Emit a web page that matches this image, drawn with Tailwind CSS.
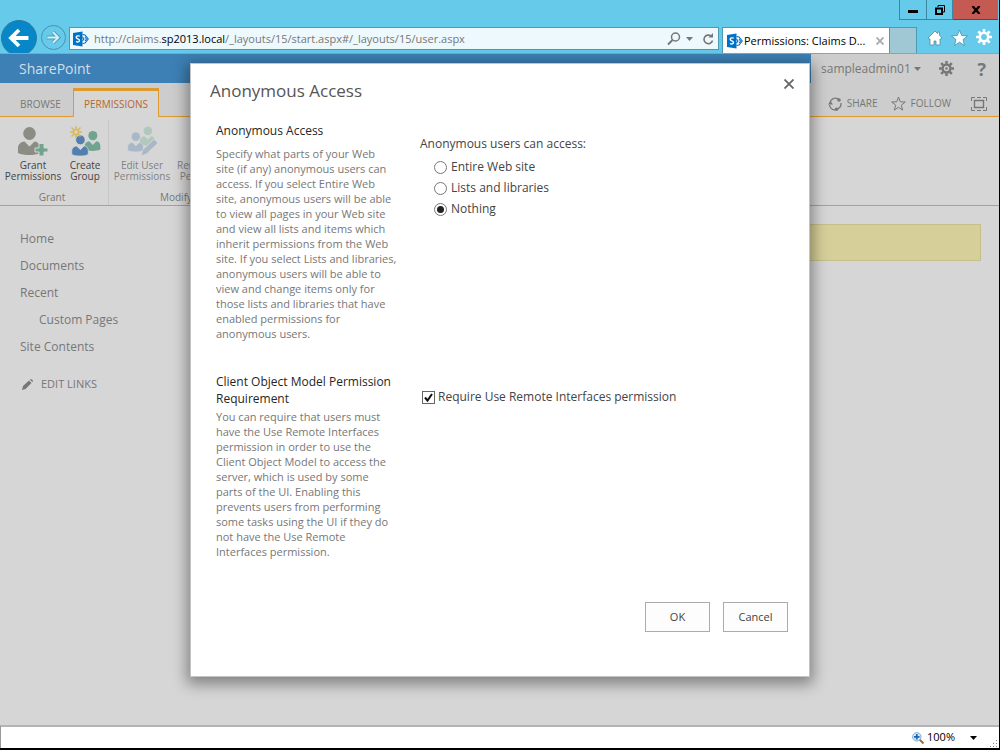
<!DOCTYPE html>
<html lang="en">
<head>
<meta charset="utf-8">
<title>Permissions: Claims Demo</title>
<script src="https://cdn.jsdelivr.net/npm/@tailwindcss/browser@4"></script>
</head>
<body class="font-['Open_Sans','Noto_Sans',sans-serif] text-xs text-[#777]">
<svg class="hidden" aria-hidden="true">
  <symbol id="sp" viewBox="0 0 16 16">
    <path d="M9 2.500h3l4 5.500-4 5.500H9z" fill="#fff"/>
    <path d="M9.500 3.500 12 4l3.200 4-3.200 4-2.500.5" fill="none" stroke="#0072c6" stroke-width="1.200"/>
    <path d="M9.500 6 11 8l-1.500 2M12 6l1.500 2L12 10" fill="none" stroke="#0072c6" stroke-width="1.100"/>
    <path d="M0 2 9.500.5v15L0 14z" fill="#0072c6"/>
    <path d="M6.700 5.200C5.200 4.500 3.200 4.800 3.200 6.300c0 1.700 3.300 1.500 3.300 3.300 0 1.500-2.100 1.700-3.500.9" fill="none" stroke="#fff" stroke-width="1.400"/>
  </symbol>
  <symbol id="gear" viewBox="0 0 16 16">
    <circle cx="8" cy="8" r="4.200" fill="none" stroke="currentColor" stroke-width="2.600"/>
    <path d="M8 0v3M8 13v3M0 8h3M13 8h3M2.300 2.300l2.200 2.200M11.500 11.500l2.200 2.200M13.700 2.300l-2.200 2.200M4.500 11.500l-2.200 2.200" stroke="currentColor" stroke-width="2.600"/>
  </symbol>
  <symbol id="user" viewBox="0 0 22 28">
    <ellipse cx="11.500" cy="6.500" rx="6.300" ry="6.500"/>
    <path d="M6.500 14.500 11.500 19.500l5-5c3.500.5 5.500 3 5.500 6.500v5c-3 1.500-7 2-11 2S3 27.500 0 26v-5c0-3.500 2.500-6 6.500-6.500z"/>
  </symbol>
</svg>

<div class="relative flex min-h-screen flex-col border-r border-b-2 border-black bg-[#d6d6d6]">
  <header class="overflow-hidden border-b border-[#8ba5b0] bg-[#66caea]">
    <div class="flex h-5 justify-end pr-px">
      <button aria-label="Minimize" class="flex w-7 items-center justify-center border border-t-0 border-[#3d87a0]"><span class="mt-1 h-[3px] w-2.5 bg-black"></span></button>
      <button aria-label="Restore" class="flex w-[26px] items-center justify-center border-r border-b border-[#3d87a0]">
        <svg class="size-2.5" viewBox="0 0 10 10"><path d="M3 2V.500h6.500V7H8" fill="none" stroke="#000"/><path d="M1 3.500h6V9H1z" fill="none" stroke="#000" stroke-width="2"/></svg>
      </button>
      <button aria-label="Close window" class="flex w-[45px] items-center justify-center border-b border-[#7d3a35] bg-[#c55a52]">
        <svg class="h-2 w-2.5" viewBox="0 0 10 8"><path d="M1.500 0l7 8M8.500 0l-7 8" stroke="#000" stroke-width="2.200"/></svg>
      </button>
    </div>
    <div class="flex h-[33px]">
      <button aria-label="Back" class="ml-px size-9 shrink-0 self-start rounded-full border border-[#287b9f] bg-[#0787c8]">
        <svg class="size-full" viewBox="0 0 36 36"><path d="M28 18H10M18 9.500 9.500 18l8.500 8.500" fill="none" stroke="#fff" stroke-width="4"/></svg>
      </button>
      <button aria-label="Forward" class="mt-[5px] ml-1 size-[25px] shrink-0 rounded-full border border-[#4b93ac]">
        <svg class="size-full" viewBox="0 0 24 24"><path d="M5 12h12M11.500 6.500 17 12l-5.500 5.500" fill="none" stroke="#4b9db8" stroke-width="4"/><path d="M5.500 12h12M11.500 6.500 17 12l-5.500 5.500" fill="none" stroke="#d2f0fa" stroke-width="2"/></svg>
      </button>
      <div class="mt-[7px] ml-[3px] flex h-[23px] min-w-0 flex-1 items-center border border-[#4c9ab3] bg-[#edf9fd] pl-[3px]">
        <svg class="size-4 shrink-0"><use href="#sp"/></svg>
        <div class="ml-[5px] flex-1 truncate pt-px text-[11px] text-[#777]">http://claims.<span class="text-black">sp2013.local</span>/_layouts/15/start.aspx#/_layouts/15/user.aspx</div>
        <button aria-label="Search"><svg class="h-4 w-[14px]" viewBox="0 0 14 16"><circle cx="8.500" cy="6" r="4" fill="none" stroke="#777" stroke-width="1.500"/><path d="M5.500 9 1 13.500" stroke="#777" stroke-width="2"/></svg></button>
        <button aria-label="Search options" class="mx-[5px]"><svg class="h-1 w-[7px]" viewBox="0 0 7 4"><path d="M0 0h7L3.500 4z" fill="#777"/></svg></button>
        <button aria-label="Refresh" class="ml-1 mr-1"><svg class="size-3" viewBox="0 0 12 12"><path d="M9 3a4.300 4.300 0 1 0 1.500 4.500" fill="none" stroke="#777" stroke-width="1.600"/><path d="M6.500 4.500H11V0z" fill="#777"/></svg></button>
      </div>
      <div class="mt-[7px] ml-[3px] flex w-[168px] items-center border border-b-0 border-[#4c9ab3] bg-white pl-1 text-black">
        <svg class="size-4 shrink-0"><use href="#sp"/></svg>
        <span class="ml-px flex-1 pt-px text-[11px] whitespace-nowrap">Permissions: Claims D...</span>
        <button aria-label="Close tab" class="mr-[5px]"><svg class="size-2" viewBox="0 0 8 8"><path d="M.500.500l7 7M7.500.500l-7 7" stroke="#aaa" stroke-width="1.800"/></svg></button>
      </div>
      <button aria-label="New tab" class="mt-[7px] w-[27px] border border-b-0 border-l-0 border-[#4c9ab3] bg-[#a0c8d4]"></button>
      <div class="mt-[9px] mr-[7px] ml-[10px] flex items-start gap-2 text-white">
        <button aria-label="Home"><svg class="h-[18px] w-4" viewBox="0 0 16 18"><path d="M8 2 1 9l1 1h1v6h4v-4h2v4h4v-6h1l1-1-2.500-2.500V3h-2v1.500z" fill="#fff" stroke="#4b8da5" stroke-width=".8"/></svg></button>
        <button aria-label="Favorites"><svg class="h-[18px] w-[17px]" viewBox="0 0 17 18"><path d="m8.500 1 2.200 5.500 5.800.4-4.500 3.700 1.500 5.900-5-3.300-5 3.300L5 10.600.500 6.900l5.800-.4z" fill="#fff" stroke="#4b8da5" stroke-width=".8"/></svg></button>
        <button aria-label="Tools"><svg class="size-4"><use href="#gear"/></svg></button>
      </div>
    </div>
  </header>

  <div class="flex h-[29px] bg-[#cdcdcd]">
    <div class="flex-1 bg-[#3d80b5] pl-[19px] text-sm leading-[30px] text-[#d2dfe9]">SharePoint</div>
    <div class="flex w-[188px] items-center pr-[13px] pl-[10px]">
      <button class="flex items-center gap-[3px] text-xs">sampleadmin01<svg class="h-1 w-[7px]" viewBox="0 0 7 4"><path d="M0 0h7L3.500 4z" fill="#777"/></svg></button>
      <button aria-label="Settings" class="mr-auto ml-[18px]"><svg class="size-[15px]" viewBox="0 0 16 16"><use href="#gear"/><circle cx="8" cy="8" r="1.300" fill="#777"/></svg></button>
      <button aria-label="Help" class="text-lg leading-5 font-bold">?</button>
    </div>
  </div>

  <nav class="flex h-[34px] bg-[#cdcdcd] text-[10px]">
    <a href="#" class="w-[73px] border-b border-[#dc9a30] pt-[13px] pl-5 leading-4">BROWSE</a>
    <a href="#" class="mt-[5px] w-[86px] border border-t-3 border-b-0 border-[#dc9a30] bg-[#d6d6d6] pt-[5px] text-center leading-4 text-[#b8662f]">PERMISSIONS</a>
    <div class="flex flex-1 items-center justify-end border-b border-[#dc9a30] pt-2 pr-3">
      <button class="flex items-center gap-[5px]"><svg class="size-[14px]" viewBox="0 0 14 14"><path d="M5 1.500A6 6 0 0 1 11.500 3M13 6a6 6 0 0 1-3.500 6M7 13A6 6 0 0 1 1.500 8" fill="none" stroke="#777" stroke-width="1.300"/><circle cx="11" cy="3" r="1.800" fill="#777"/><circle cx="8.500" cy="12.200" r="1.700" fill="#777"/><path d="M0 7.500 2.500 4 5 7.500z" fill="#777"/><path d="M2 5.500c.5-2 2-3.500 4-4" fill="none" stroke="#777" stroke-width="1.200"/></svg>SHARE</button>
      <button class="ml-[13px] flex items-center gap-[5px]"><svg class="size-[15px]" viewBox="0 0 15 15"><path d="m7.500 1 1.800 4.800 5 .2-4 3.200 1.400 4.900-4.200-2.800-4.200 2.800 1.400-4.900-4-3.200 5-.2z" fill="none" stroke="#777"/></svg>FOLLOW</button>
      <button aria-label="Focus on content" class="ml-5"><svg class="h-[14px] w-4" viewBox="0 0 16 14"><path d="M.500 4V.500H4M12 .500h3.500V4M15.500 10v3.500H12M4 13.500H.500V10M6 .500h4M6 13.500h4" fill="none" stroke="#777"/><path d="M3.500 3.500h9v7h-9z" fill="none" stroke="#777" stroke-width="1.400"/></svg></button>
    </div>
  </nav>

  <div class="flex h-[89px] border-b border-[#dc9a30] text-[10px] leading-[11px]">
    <div class="mt-[3px] flex w-[109px] flex-col border-r border-[#c6c6c6] pt-[6px] text-[#444]">
      <div class="flex">
        <button class="flex w-[66px] flex-col items-center whitespace-nowrap">
          <svg class="mb-1 h-[30px] w-[30px]" viewBox="0 0 30 30"><use href="#user" x="0" y="1" width="22" height="28" fill="#8b8c83"/><path d="M21 17.500h5v4.500h4v4h-4v4h-5v-4h-4v-4h4z" fill="#6fa58f" stroke="#d6d6d6"/></svg>
          <span>Grant<br>Permissions</span></button>
        <button class="flex w-[38px] flex-col items-center">
          <svg class="mb-1 h-[30px] w-[31px]" viewBox="0 0 31 30"><use href="#user" x="14" y="5" width="17" height="20" fill="#6fa58f"/><use href="#user" x="1" y="9" width="18" height="21" fill="#527eb0" stroke="#d6d6d6"/><circle cx="6" cy="6" r="2.500" fill="none" stroke="#d8b85b" stroke-width="1.500"/><path d="M6 0v3M6 9v3M0 6h3M9 6h3M1.500 1.500 4 4M8 8l2.500 2.500M10.500 1.500 8 4M4 8l-2.500 2.500" stroke="#d8b85b" stroke-width="1.500"/></svg>
          <span>Create<br>Group</span></button>
      </div>
      <div class="mt-[7px] pr-1 text-center leading-4 text-[#777]">Grant</div>
    </div>
    <div class="mt-[3px] flex w-[134px] flex-col pt-[6px] text-[#808285]">
      <div class="flex">
        <button disabled class="flex w-[66px] flex-col items-center whitespace-nowrap">
          <svg class="mb-1 h-[30px] w-[31px]" viewBox="0 0 31 30"><use href="#user" x="13" y="0" width="15" height="20" fill="#afc9bd"/><use href="#user" x="0" y="6" width="17" height="20" fill="#a9b8c9" stroke="#d6d6d6"/><path d="m14 30 1.500-6L27 13l4 4-11.500 11z" fill="#a9b8c9" stroke="#d6d6d6"/></svg>
          <span>Edit User<br>Permissions</span></button>
        <button disabled class="flex w-[66px] flex-col items-center pt-[34px] whitespace-nowrap"><span>Remove User<br>Permissions</span></button>
      </div>
      <div class="mt-[7px] text-center leading-4 text-[#777]">Modify</div>
    </div>
  </div>

  <main class="flex flex-1 items-start">
    <nav class="w-[190px] pt-[25px] pl-5 leading-4">
      <ul class="flex flex-col gap-[11px]">
        <li><a href="#">Home</a></li>
        <li><a href="#">Documents</a></li>
        <li><a href="#">Recent</a></li>
        <li class="pl-[19px]"><a href="#">Custom Pages</a></li>
        <li><a href="#">Site Contents</a></li>
      </ul>
      <a href="#" class="mt-[21px] flex items-center gap-2 text-[11px]"><svg class="ml-0.5 size-[11px]" viewBox="0 0 11 11"><path d="m0 11 1-4 6-5.500 2.500 2.500L3.500 10zM8 .700l.700-.7q2.300.3 2.300 2.300l-.7.700z" fill="#777"/></svg>EDIT LINKS</a>
    </nav>
    <div class="mt-[18px] mr-[18px] h-[37px] flex-1 border border-[#c3c08a] bg-[#d7cf99]"></div>
  </main>

  <footer class="flex h-[23px] items-center justify-end border-t-2 border-l border-[#b4b4b4] border-l-[#999] bg-white text-[11px] text-black">
    <button class="flex items-center gap-[3px]"><svg class="size-3" viewBox="0 0 12 12"><path d="m7.500 7.500 4 4" stroke="#a66b3c" stroke-width="2"/><circle cx="4.800" cy="4.800" r="4.200" fill="#d9edfb" stroke="#86a6c2"/><path d="M4.800 2v5.600M2 4.800h5.600" stroke="#1769bd" stroke-width="1.800"/></svg>100%<svg class="ml-3 h-1 w-[7px]" viewBox="0 0 7 4"><path d="M0 0h7L3.500 4z"/></svg></button>
    <svg class="mr-px ml-[13px] size-2 self-end" viewBox="0 0 8 8"><path d="M6 0h1v1H6zM3 3h1v1H3zM6 3h1v1H6zM0 6h1v1H0zM3 6h1v1H3zM6 6h1v1H6z" fill="#888"/></svg>
  </footer>

  <div class="absolute inset-x-0 top-0 -mr-px flex justify-center pt-[63px]">
    <section role="dialog" aria-labelledby="title" class="w-[620px] border border-[#c4c4c4] bg-white pr-[21px] pb-11 pl-[19px] text-[#444] shadow-[0_4px_14px_3px_rgba(0,0,0,0.4)]">
      <div class="flex items-start justify-between">
        <h1 id="title" class="pt-[15px] text-[17px] leading-6 text-[#555]">Anonymous Access</h1>
        <button aria-label="Close" class="mt-[15px] -mr-[11px] px-[5px]"><svg class="size-[10px]" viewBox="0 0 10 10"><path d="M.500.500l9 9M9.500.500l-9 9" stroke="#666" stroke-width="1.800"/></svg></button>
      </div>
      <div class="mt-[19px] grid grid-cols-[204px_1fr] pl-[6px]">
        <div>
          <h2 class="leading-[17px] text-[#262626]">Anonymous Access</h2>
          <p class="mt-[7px] text-[11px] leading-[15px] whitespace-nowrap text-[#777]">Specify what parts of your Web<br>site (if any) anonymous users can<br>access. If you select Entire Web<br>site, anonymous users will be able<br>to view all pages in your Web site<br>and view all lists and items which<br>inherit permissions from the Web<br>site. If you select Lists and libraries,<br>anonymous users will be able to<br>view and change items only for<br>those lists and libraries that have<br>enabled permissions for<br>anonymous users.</p>
        </div>
        <fieldset class="pt-[14px]">
          <legend class="float-left w-full leading-4">Anonymous users can access:</legend>
          <div class="clear-both flex flex-col gap-[5px] pt-[7px] pl-[14px] leading-4">
            <label class="flex items-center gap-1"><input type="radio" name="a" class="size-[13px] appearance-none rounded-full border border-[#777] bg-white">Entire Web site</label>
            <label class="flex items-center gap-1"><input type="radio" name="a" class="size-[13px] appearance-none rounded-full border border-[#777] bg-white">Lists and libraries</label>
            <label class="flex items-center gap-1"><input type="radio" name="a" checked class="size-[13px] appearance-none rounded-full border border-[#777] bg-[#222] bg-clip-content p-[2px]">Nothing</label>
          </div>
        </fieldset>
      </div>
      <div class="mt-8 grid grid-cols-[204px_1fr] pl-[6px]">
        <div>
          <h2 class="leading-[17px] whitespace-nowrap text-[#262626]">Client Object Model Permission<br>Requirement</h2>
          <p class="mt-[2px] text-[11px] leading-[15px] whitespace-nowrap text-[#777]">You can require that users must<br>have the Use Remote Interfaces<br>permission in order to use the<br>Client Object Model to access the<br>server, which is used by some<br>parts of the UI. Enabling this<br>prevents users from performing<br>some tasks using the UI if they do<br>not have the Use Remote<br>Interfaces permission.</p>
        </div>
        <label class="flex items-center gap-[3px] self-start pt-4 pl-[2px] leading-4">
          <span class="relative size-[13px]"><input type="checkbox" checked class="block size-[13px] appearance-none border border-[#666] bg-white"><svg class="pointer-events-none absolute inset-0 size-[13px]" viewBox="0 0 13 13"><path d="m3 6.500 2.500 3L10 3" fill="none" stroke="#111" stroke-width="2"/></svg></span>
          Require Use Remote Interfaces permission</label>
      </div>
      <div class="mt-[43px] flex justify-end gap-[13px] text-[11px]">
        <button class="h-[30px] w-[65px] border border-[#ababab] bg-[#fdfdfd]">OK</button>
        <button class="h-[30px] w-[65px] border border-[#ababab] bg-[#fdfdfd]">Cancel</button>
      </div>
    </section>
  </div>
</div>
</body>
</html>
